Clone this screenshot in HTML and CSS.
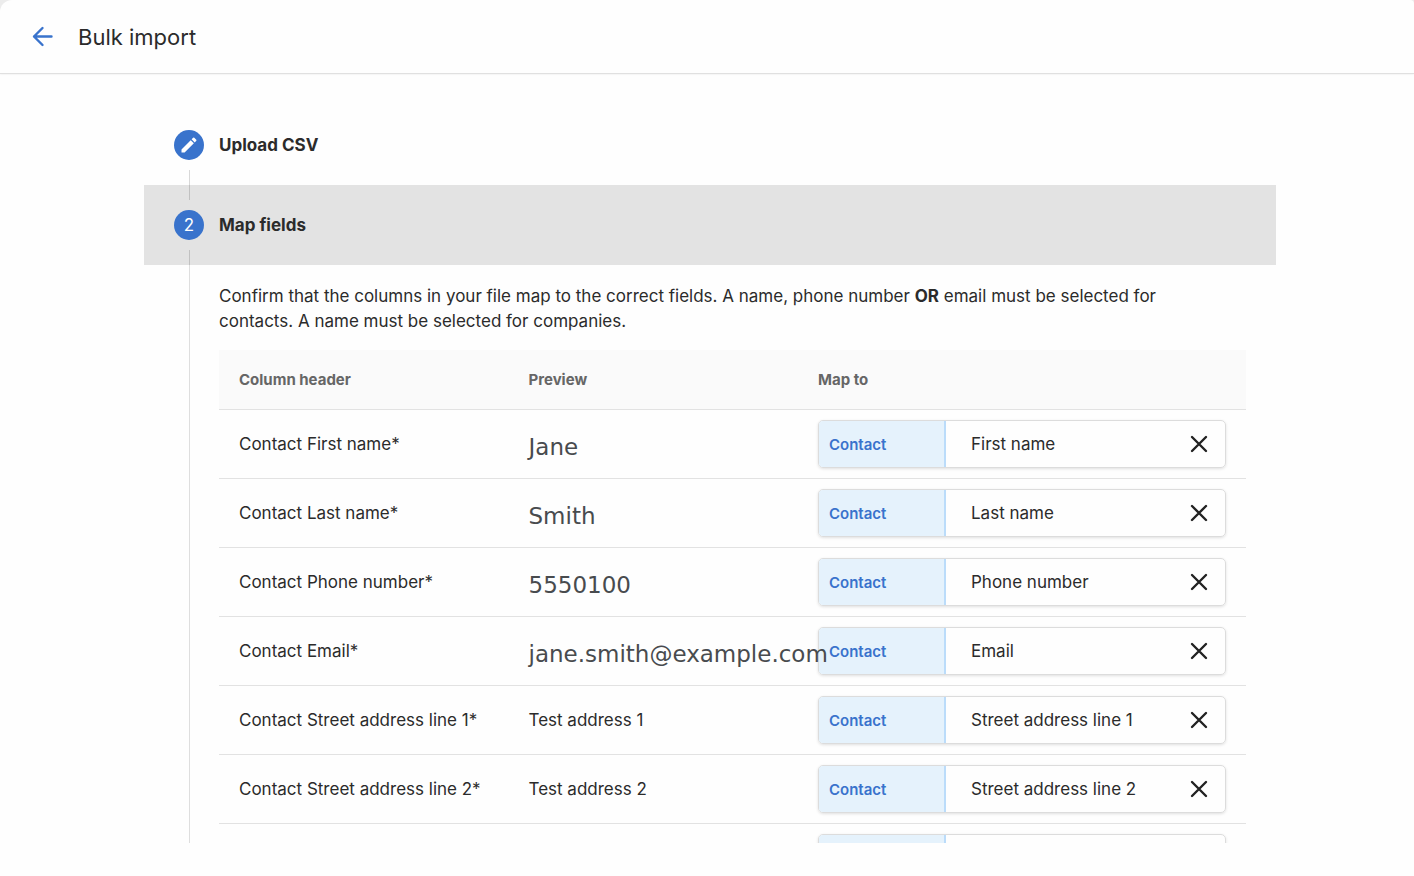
FILE: index.html
```html
<!DOCTYPE html>
<html lang="en">
<head>
    <meta charset="UTF-8">
    <meta name="viewport" content="width=device-width, initial-scale=1.0">
    <title>Bulk import</title>
    <link rel="stylesheet" href="styles.css">
</head>
<body>
    <div class="page">
        <header class="topbar">
            <a href="#" class="back" aria-label="Back">
                <svg width="22" height="22" viewBox="0 0 22 22" fill="none" stroke="currentColor" stroke-width="2.400" stroke-linecap="round" stroke-linejoin="round">
                    <path d="M20.500 10.500H3M11.500 2L3 10.500l8.500 8.500"/>
                </svg>
            </a>
            <h1>Bulk import</h1>
        </header>

        <main class="stepper">
            <button type="button" class="step">
                <span class="step-icon">
                    <svg width="20" height="20" viewBox="0 0 24 24" fill="currentColor">
                        <path d="M3 17.250V21h3.750L17.810 9.940l-3.750-3.750L3 17.250zM20.710 7.040a1 1 0 0 0 0-1.410l-2.340-2.340a1 1 0 0 0-1.410 0l-1.830 1.830 3.750 3.750 1.830-1.830z"/>
                    </svg>
                </span>
                <span>Upload CSV</span>
            </button>
            <button type="button" class="step active">
                <span class="step-icon">2</span>
                <span>Map fields</span>
            </button>

            <section class="step-content">
                <p>Confirm that the columns in your file map to the correct fields. A name, phone number <strong>OR</strong> email must be selected for contacts. A name must be selected for companies.</p>

                <table class="mapping">
                    <thead>
                        <tr>
                            <th>Column header</th>
                            <th>Preview</th>
                            <th class="map-col">Map to</th>
                        </tr>
                    </thead>
                    <tbody>
                        <tr>
                            <td>Contact First name*</td>
                            <td class="sample">Jane</td>
                            <td>
                                <div class="field">
                                    <label for="map-1">Contact</label>
                                    <input type="text" id="map-1" value="First name">
                                    <button type="button" aria-label="Clear"><svg width="18" height="18" viewBox="0 0 18 18"><path d="M2 2l14 14M16 2L2 16"/></svg></button>
                                </div>
                            </td>
                        </tr>
                        <tr>
                            <td>Contact Last name*</td>
                            <td class="sample">Smith</td>
                            <td>
                                <div class="field">
                                    <label for="map-2">Contact</label>
                                    <input type="text" id="map-2" value="Last name">
                                    <button type="button" aria-label="Clear"><svg width="18" height="18" viewBox="0 0 18 18"><path d="M2 2l14 14M16 2L2 16"/></svg></button>
                                </div>
                            </td>
                        </tr>
                        <tr>
                            <td>Contact Phone number*</td>
                            <td class="sample">5550100</td>
                            <td>
                                <div class="field">
                                    <label for="map-3">Contact</label>
                                    <input type="text" id="map-3" value="Phone number">
                                    <button type="button" aria-label="Clear"><svg width="18" height="18" viewBox="0 0 18 18"><path d="M2 2l14 14M16 2L2 16"/></svg></button>
                                </div>
                            </td>
                        </tr>
                        <tr>
                            <td>Contact Email*</td>
                            <td class="sample">jane.smith@example.com</td>
                            <td>
                                <div class="field">
                                    <label for="map-4">Contact</label>
                                    <input type="text" id="map-4" value="Email">
                                    <button type="button" aria-label="Clear"><svg width="18" height="18" viewBox="0 0 18 18"><path d="M2 2l14 14M16 2L2 16"/></svg></button>
                                </div>
                            </td>
                        </tr>
                        <tr>
                            <td>Contact Street address line 1*</td>
                            <td>Test address 1</td>
                            <td>
                                <div class="field">
                                    <label for="map-5">Contact</label>
                                    <input type="text" id="map-5" value="Street address line 1">
                                    <button type="button" aria-label="Clear"><svg width="18" height="18" viewBox="0 0 18 18"><path d="M2 2l14 14M16 2L2 16"/></svg></button>
                                </div>
                            </td>
                        </tr>
                        <tr>
                            <td>Contact Street address line 2*</td>
                            <td>Test address 2</td>
                            <td>
                                <div class="field">
                                    <label for="map-6">Contact</label>
                                    <input type="text" id="map-6" value="Street address line 2">
                                    <button type="button" aria-label="Clear"><svg width="18" height="18" viewBox="0 0 18 18"><path d="M2 2l14 14M16 2L2 16"/></svg></button>
                                </div>
                            </td>
                        </tr>
                        <tr>
                            <td></td>
                            <td></td>
                            <td>
                                <div class="field">
                                    <label for="map-7"></label>
                                    <input type="text" id="map-7" aria-label="Map to">
                                </div>
                            </td>
                        </tr>
                    </tbody>
                </table>
            </section>
        </main>
    </div>
</body>
</html>
```
FILE: styles.css
```css
* {
    box-sizing: border-box;
}
body {
    margin: 0;
    background-color: #ececec;
    color: #2b2b2b;
    font-family: Inter, sans-serif;
    font-size: 17px;
}
button,
input {
    font: inherit;
    color: inherit;
    background: none;
    border: none;
    padding: 0;
}
button {
    cursor: pointer;
}
.page {
    display: flex;
    flex-direction: column;
    height: 100vh;
    padding-bottom: 33px;
    background-color: #fefefe;
    border-radius: 12px 4px 0 0;
}
.topbar {
    display: flex;
    align-items: center;
    gap: 25px;
    height: 74px;
    flex-shrink: 0;
    padding: 0 31px;
    border-bottom: 1px solid #e0e0e0;
    box-shadow: 0 0 2px rgba(0, 0, 0, 0.1);
}
.back {
    display: flex;
    color: #3973cc;
}
h1 {
    margin: 0;
    font-size: 22px;
    font-weight: 400;
}

/* Steps */
.stepper {
    flex: 1;
    min-height: 0;
    margin: 31px 138px 0 144px;
    overflow-y: auto;
    scrollbar-width: none;
}
.step {
    position: relative;
    display: flex;
    align-items: center;
    gap: 15px;
    width: 100%;
    height: 80px;
    padding: 0 30px;
    font-weight: 700;
}
.step.active {
    background-color: #e3e3e3;
}
.step-icon {
    display: flex;
    align-items: center;
    justify-content: center;
    width: 30px;
    height: 30px;
    border-radius: 50%;
    background-color: #3973cc;
    color: #fff;
    font-weight: 400;
}
/* connector pieces above and below each circle */
.step::after,
.step.active::before {
    content: "";
    position: absolute;
    left: 45px;
    width: 1px;
    height: 15px;
    background-color: rgba(0, 0, 0, 0.15);
}
.step::after {
    bottom: 0;
}
.step.active::before {
    top: 0;
}
.step-content {
    margin-left: 45px;
    padding: 19px 30px 0 29px;
    border-left: 1px solid #dedede;
}
.step-content p {
    margin: 0 20px 16px 0;
    line-height: 25px;
}
.step-content strong {
    font-weight: 700;
}

/* Mapping table */
.mapping {
    width: 100%;
    table-layout: fixed;
    border-collapse: separate;
    border-spacing: 0;
}
.mapping th,
.mapping td {
    padding: 0 20px;
    border-bottom: 1px solid #e2e2e2;
    text-align: left;
    white-space: nowrap;
}
.mapping th {
    height: 60px;
    background-color: #fafafa;
    color: #666;
    font-size: 15px;
    font-weight: 700;
}
.mapping td {
    height: 69px;
}
.map-col {
    width: 448px;
}
.mapping .sample {
    position: relative;
    z-index: 1;
    padding-top: 6px;
    color: #484b4e;
    font-family: "DejaVu Sans", sans-serif;
    font-size: 23px;
}
.field {
    display: flex;
    height: 48px;
    border: 1px solid #dcdcdc;
    border-radius: 5px;
    box-shadow: 0 1px 3px rgba(0, 0, 0, 0.12);
    overflow: hidden;
}
.field label {
    display: flex;
    align-items: center;
    flex: 0 0 127px;
    padding-left: 10px;
    background-color: #e5f2fc;
    border-right: 2px solid #bbdcfa;
    color: #3973cc;
    font-size: 15px;
    font-weight: 600;
}
.field input {
    flex: 1;
    min-width: 0;
    padding-left: 25px;
}
.field button {
    display: flex;
    align-items: center;
    padding: 0 17px;
}
.field svg {
    fill: none;
    stroke: #222;
    stroke-width: 2.4;
    stroke-linecap: round;
}
```
